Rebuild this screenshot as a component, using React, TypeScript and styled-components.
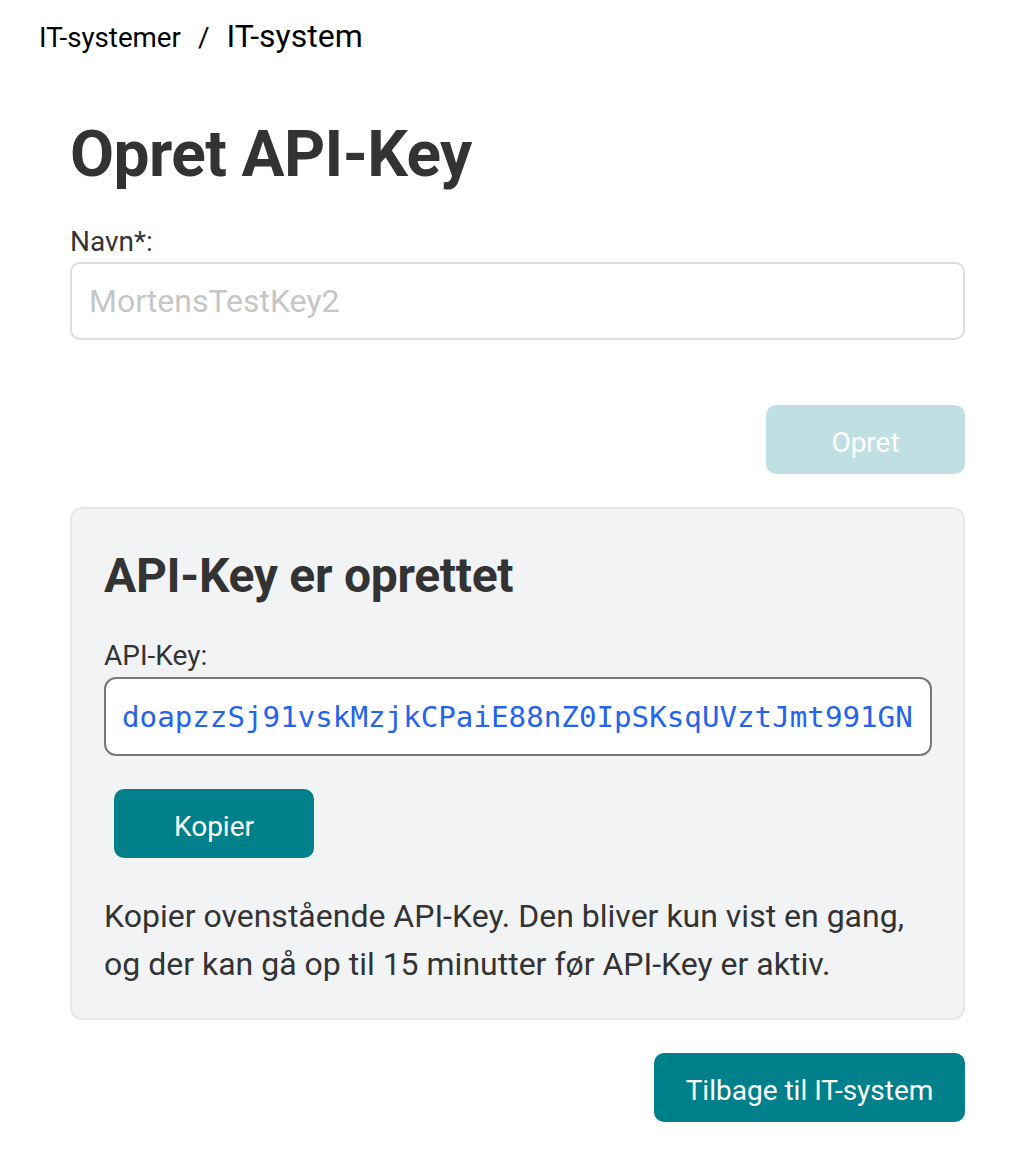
import React from "react";
import styled, { createGlobalStyle } from "styled-components";

const GlobalStyle = createGlobalStyle`
  html, body { margin: 0; padding: 0; background: #ffffff; }
  body { font-family: Roboto, "Liberation Sans", Arial, sans-serif; color: #333333; }
  * { box-sizing: border-box; }
`;

const Page = styled.div`
  width: 1012px;
  min-height: 1158px;
  display: flex;
  flex-direction: column;
`;

const Breadcrumb = styled.nav`
  display: flex;
  align-items: baseline;
  gap: 17px;
  height: 56px;
  padding: 16px 0 0 39px;
  color: #000;
`;

const Crumb = styled.span<{ $current?: boolean }>`
  font-size: ${(p) => (p.$current ? "32px" : "27.7px")};
  line-height: 40px;
`;

const Separator = styled.span`
  font-size: 28px;
  line-height: 40px;
  color: #000;
`;

const Main = styled.main`
  display: flex;
  flex-direction: column;
  padding: 0 47px 0 70px;
`;

const Title = styled.h1`
  margin: 61px 0 0 0;
  font-size: 64px;
  font-weight: 700;
  line-height: 75px;
  letter-spacing: -0.6px;
  color: #333333;
`;

const Label = styled.label`
  display: block;
  font-size: 28px;
  line-height: 33px;
  color: #333333;
`;

const NameLabel = styled(Label)`
  margin-top: 33px;
`;

const TextInput = styled.input`
  margin-top: 4px;
  width: 100%;
  height: 78px;
  border: 2px solid #dddddd;
  border-radius: 10px;
  background: #ffffff;
  padding: 0 17px;
  font-family: Roboto, sans-serif;
  font-size: 32px;
  color: #333;
  outline: none;
  &::placeholder { color: #c6c6c6; }
`;

const ActionRow = styled.div<{ $top: number }>`
  display: flex;
  justify-content: flex-end;
  margin-top: ${(p) => p.$top}px;
`;

const Button = styled.button<{ $disabled?: boolean; $width: number }>`
  width: ${(p) => p.$width}px;
  height: 69px;
  padding: 5px 0 0 0;
  border: none;
  border-radius: 10px;
  background: ${(p) => (p.$disabled ? "#c0dfe2" : "#00808b")};
  color: #ffffff;
  font-family: Roboto, sans-serif;
  font-size: 28px;
  cursor: pointer;
`;

const Panel = styled.section`
  margin-top: 33px;
  background: #f2f3f5;
  border: 2px solid #e6e7e9;
  border-radius: 12px;
  padding: 39px 31px 30px 32px;
  display: flex;
  flex-direction: column;
`;

const PanelTitle = styled.h2`
  margin: 0;
  font-size: 48px;
  font-weight: 700;
  line-height: 56px;
  letter-spacing: -0.3px;
  color: #333333;
`;

const KeyLabel = styled(Label)`
  margin-top: 35px;
`;

const KeyBox = styled.div`
  margin-top: 5px;
  height: 79px;
  background: #ffffff;
  border: 2px solid #777777;
  border-radius: 12px;
  display: flex;
  align-items: center;
  padding: 0 16px;
  font-family: "DejaVu Sans Mono", "Liberation Mono", monospace;
  font-size: 29.2px;
  color: #2563eb;
  white-space: nowrap;
  overflow: hidden;
`;

const CopyRow = styled.div`
  margin-top: 33px;
  padding-left: 10px;
`;

const Note = styled.p`
  margin: 34px 0 0 0;
  font-size: 32px;
  line-height: 48px;
  color: #333333;
`;

export default function App() {
  return (
    <>
      <GlobalStyle />
      <Page>
        <Breadcrumb>
          <Crumb>IT-systemer</Crumb>
          <Separator>/</Separator>
          <Crumb $current>IT-system</Crumb>
        </Breadcrumb>
        <Main>
          <Title>Opret API-Key</Title>
          <NameLabel htmlFor="navn">Navn*:</NameLabel>
          <TextInput id="navn" placeholder="MortensTestKey2" />
          <ActionRow $top={65}>
            <Button $disabled $width={199}>Opret</Button>
          </ActionRow>
          <Panel>
            <PanelTitle>API-Key er oprettet</PanelTitle>
            <KeyLabel>API-Key:</KeyLabel>
            <KeyBox>doapzzSj91vskMzjkCPaiE88nZ0IpSKsqUVztJmt991GN</KeyBox>
            <CopyRow>
              <Button $width={200}>Kopier</Button>
            </CopyRow>
            <Note>
              Kopier ovenstående API-Key. Den bliver kun vist en gang,
              <br />
              og der kan gå op til 15 minutter før API-Key er aktiv.
            </Note>
          </Panel>
          <ActionRow $top={33}>
            <Button $width={311}>Tilbage til IT-system</Button>
          </ActionRow>
        </Main>
      </Page>
    </>
  );
}
